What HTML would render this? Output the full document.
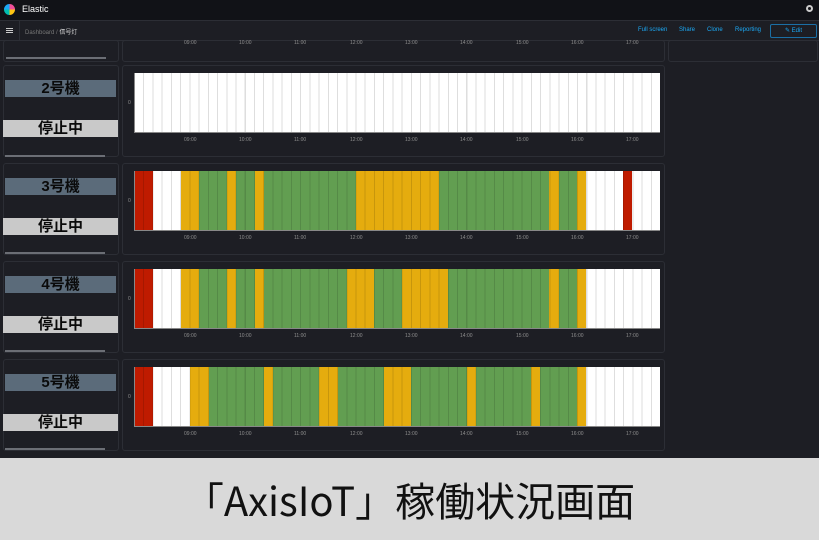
<!DOCTYPE html>
<html><head><meta charset="utf-8"><style>
*{margin:0;padding:0;box-sizing:border-box}
body{width:819px;height:540px;overflow:hidden;background:#1d1e24;font-family:"Liberation Sans","Noto Sans CJK JP",sans-serif;position:relative}
.a{position:absolute}
.panel{position:absolute;background:#1d1e24;border:1px solid #2c2e35;border-radius:3px}
.lbl{position:absolute;left:5px;width:111px;height:17px;background:#5b6b7a;color:#0a0a0a;font-weight:bold;font-size:15px;line-height:17px;text-align:center}
.stp{position:absolute;left:3px;width:115px;height:17px;background:#c9c9c9;color:#0a0a0a;font-weight:bold;font-size:15px;line-height:17px;text-align:center}
.ln{position:absolute;left:5px;width:100px;height:2px;background:#6b6e75}
.plot{position:absolute;left:134px;width:526px;height:60px;display:flex;border-left:1px solid #888;border-bottom:1px solid #888}
.plot div{height:100%}
.plot::after{content:"";position:absolute;inset:0;background:repeating-linear-gradient(90deg,transparent 0 8.2px,rgba(0,0,0,.13) 8.2px 9.23px)}
.R{background:#bf1b00}.W{background:#fff}.Y{background:#e5ac0e}.G{background:#629e51}
.t{position:absolute;font-size:5px;color:#8e8e8e}
.z{position:absolute;left:128px;font-size:5px;color:#8e8e8e}
</style></head><body>
<div class="a" style="left:0;top:0;width:819px;height:20px;background:#111217"></div>
<div class="a" style="left:4px;top:4px;width:11px;height:11px;border-radius:50%;background:conic-gradient(#f04e98 0 25%,#fec514 0 50%,#00bfb3 0 75%,#1ba9f5 0)"></div>
<div class="a" style="left:22px;top:4px;color:#fff;font-size:9px">Elastic</div>
<div class="a" style="left:806px;top:5px;width:7px;height:7px;border-radius:50%;border:2px solid #ccc"></div>
<div class="a" style="left:0;top:20px;width:819px;height:21px;background:#1d1e24;border-top:1px solid #2c2e35;border-bottom:1px solid #2c2e35"></div>
<div class="a" style="left:6px;top:28px;width:7px;height:5px;border-top:1px solid #ccc;border-bottom:1px solid #ccc"></div>
<div class="a" style="left:6px;top:30px;width:7px;height:1px;background:#ccc"></div>
<div class="a" style="left:19px;top:21px;width:1px;height:20px;background:#2c2e35"></div>
<div class="a" style="left:25px;top:27px;font-size:6px;color:#777">Dashboard / <span style="color:#ddd">信号灯</span></div>
<div class="a" style="left:638px;top:27px;font-size:6px;color:#1ba9f5">Full screen</div>
<div class="a" style="left:679px;top:27px;font-size:6px;color:#1ba9f5">Share</div>
<div class="a" style="left:707px;top:27px;font-size:6px;color:#1ba9f5">Clone</div>
<div class="a" style="left:735px;top:27px;font-size:6px;color:#1ba9f5">Reporting</div>
<div class="a" style="left:770px;top:24px;width:47px;height:14px;border:1px solid #1b6fa5;border-radius:2px;font-size:6px;color:#1ba9f5;text-align:center;line-height:12px">✎ Edit</div>

<div class="panel" style="left:3px;top:40px;width:116px;height:22px"><div class="ln" style="top:16px;left:2px"></div></div>
<div class="panel" style="left:122px;top:40px;width:543px;height:22px"></div>
<div class="panel" style="left:668px;top:40px;width:150px;height:22px"></div>
<div class="t" style="left:184px;top:40px">09:00</div><div class="t" style="left:239px;top:40px">10:00</div><div class="t" style="left:294px;top:40px">11:00</div><div class="t" style="left:350px;top:40px">12:00</div><div class="t" style="left:405px;top:40px">13:00</div><div class="t" style="left:460px;top:40px">14:00</div><div class="t" style="left:516px;top:40px">15:00</div><div class="t" style="left:571px;top:40px">16:00</div><div class="t" style="left:626px;top:40px">17:00</div>

<div class="panel" style="left:3px;top:65px;width:116px;height:92px"></div>
<div class="panel" style="left:122px;top:65px;width:543px;height:92px"></div>
<div class="lbl" style="top:80px">2号機</div><div class="stp" style="top:120px">停止中</div><div class="ln" style="top:155px"></div>
<div class="plot" style="top:73px"><div class="W" style="flex:57"></div></div>
<div class="z" style="top:100px">0</div>

<div class="panel" style="left:3px;top:163px;width:116px;height:92px"></div>
<div class="panel" style="left:122px;top:163px;width:543px;height:92px"></div>
<div class="lbl" style="top:178px">3号機</div><div class="stp" style="top:218px">停止中</div><div class="ln" style="top:252px"></div>
<div class="plot" style="top:171px"><div class="R" style="flex:2"></div><div class="W" style="flex:3"></div><div class="Y" style="flex:2"></div><div class="G" style="flex:3"></div><div class="Y" style="flex:1"></div><div class="G" style="flex:2"></div><div class="Y" style="flex:1"></div><div class="G" style="flex:10"></div><div class="Y" style="flex:9"></div><div class="G" style="flex:12"></div><div class="Y" style="flex:1"></div><div class="G" style="flex:2"></div><div class="Y" style="flex:1"></div><div class="W" style="flex:4"></div><div class="R" style="flex:1"></div><div class="W" style="flex:3"></div></div>
<div class="z" style="top:198px">0</div>

<div class="panel" style="left:3px;top:261px;width:116px;height:92px"></div>
<div class="panel" style="left:122px;top:261px;width:543px;height:92px"></div>
<div class="lbl" style="top:276px">4号機</div><div class="stp" style="top:316px">停止中</div><div class="ln" style="top:350px"></div>
<div class="plot" style="top:269px"><div class="R" style="flex:2"></div><div class="W" style="flex:3"></div><div class="Y" style="flex:2"></div><div class="G" style="flex:3"></div><div class="Y" style="flex:1"></div><div class="G" style="flex:2"></div><div class="Y" style="flex:1"></div><div class="G" style="flex:9"></div><div class="Y" style="flex:3"></div><div class="G" style="flex:3"></div><div class="Y" style="flex:5"></div><div class="G" style="flex:11"></div><div class="Y" style="flex:1"></div><div class="G" style="flex:2"></div><div class="Y" style="flex:1"></div><div class="W" style="flex:8"></div></div>
<div class="z" style="top:296px">0</div>

<div class="panel" style="left:3px;top:359px;width:116px;height:92px"></div>
<div class="panel" style="left:122px;top:359px;width:543px;height:92px"></div>
<div class="lbl" style="top:374px">5号機</div><div class="stp" style="top:414px">停止中</div><div class="ln" style="top:448px"></div>
<div class="plot" style="top:367px"><div class="R" style="flex:2"></div><div class="W" style="flex:4"></div><div class="Y" style="flex:2"></div><div class="G" style="flex:6"></div><div class="Y" style="flex:1"></div><div class="G" style="flex:5"></div><div class="Y" style="flex:2"></div><div class="G" style="flex:5"></div><div class="Y" style="flex:3"></div><div class="G" style="flex:6"></div><div class="Y" style="flex:1"></div><div class="G" style="flex:6"></div><div class="Y" style="flex:1"></div><div class="G" style="flex:4"></div><div class="Y" style="flex:1"></div><div class="W" style="flex:8"></div></div>
<div class="z" style="top:394px">0</div>

<div class="t" style="left:184px;top:137px">09:00</div><div class="t" style="left:239px;top:137px">10:00</div><div class="t" style="left:294px;top:137px">11:00</div><div class="t" style="left:350px;top:137px">12:00</div><div class="t" style="left:405px;top:137px">13:00</div><div class="t" style="left:460px;top:137px">14:00</div><div class="t" style="left:516px;top:137px">15:00</div><div class="t" style="left:571px;top:137px">16:00</div><div class="t" style="left:626px;top:137px">17:00</div>
<div class="t" style="left:184px;top:235px">09:00</div><div class="t" style="left:239px;top:235px">10:00</div><div class="t" style="left:294px;top:235px">11:00</div><div class="t" style="left:350px;top:235px">12:00</div><div class="t" style="left:405px;top:235px">13:00</div><div class="t" style="left:460px;top:235px">14:00</div><div class="t" style="left:516px;top:235px">15:00</div><div class="t" style="left:571px;top:235px">16:00</div><div class="t" style="left:626px;top:235px">17:00</div>
<div class="t" style="left:184px;top:333px">09:00</div><div class="t" style="left:239px;top:333px">10:00</div><div class="t" style="left:294px;top:333px">11:00</div><div class="t" style="left:350px;top:333px">12:00</div><div class="t" style="left:405px;top:333px">13:00</div><div class="t" style="left:460px;top:333px">14:00</div><div class="t" style="left:516px;top:333px">15:00</div><div class="t" style="left:571px;top:333px">16:00</div><div class="t" style="left:626px;top:333px">17:00</div>
<div class="t" style="left:184px;top:431px">09:00</div><div class="t" style="left:239px;top:431px">10:00</div><div class="t" style="left:294px;top:431px">11:00</div><div class="t" style="left:350px;top:431px">12:00</div><div class="t" style="left:405px;top:431px">13:00</div><div class="t" style="left:460px;top:431px">14:00</div><div class="t" style="left:516px;top:431px">15:00</div><div class="t" style="left:571px;top:431px">16:00</div><div class="t" style="left:626px;top:431px">17:00</div>

<div class="a" style="left:0;top:458px;width:819px;height:82px;background:#d9d9d9;color:#111;font-size:40px;line-height:82px;text-align:center;font-family:'Noto Sans CJK JP','Liberation Sans',sans-serif">「AxisIoT」稼働状況画面</div>
</body></html>
